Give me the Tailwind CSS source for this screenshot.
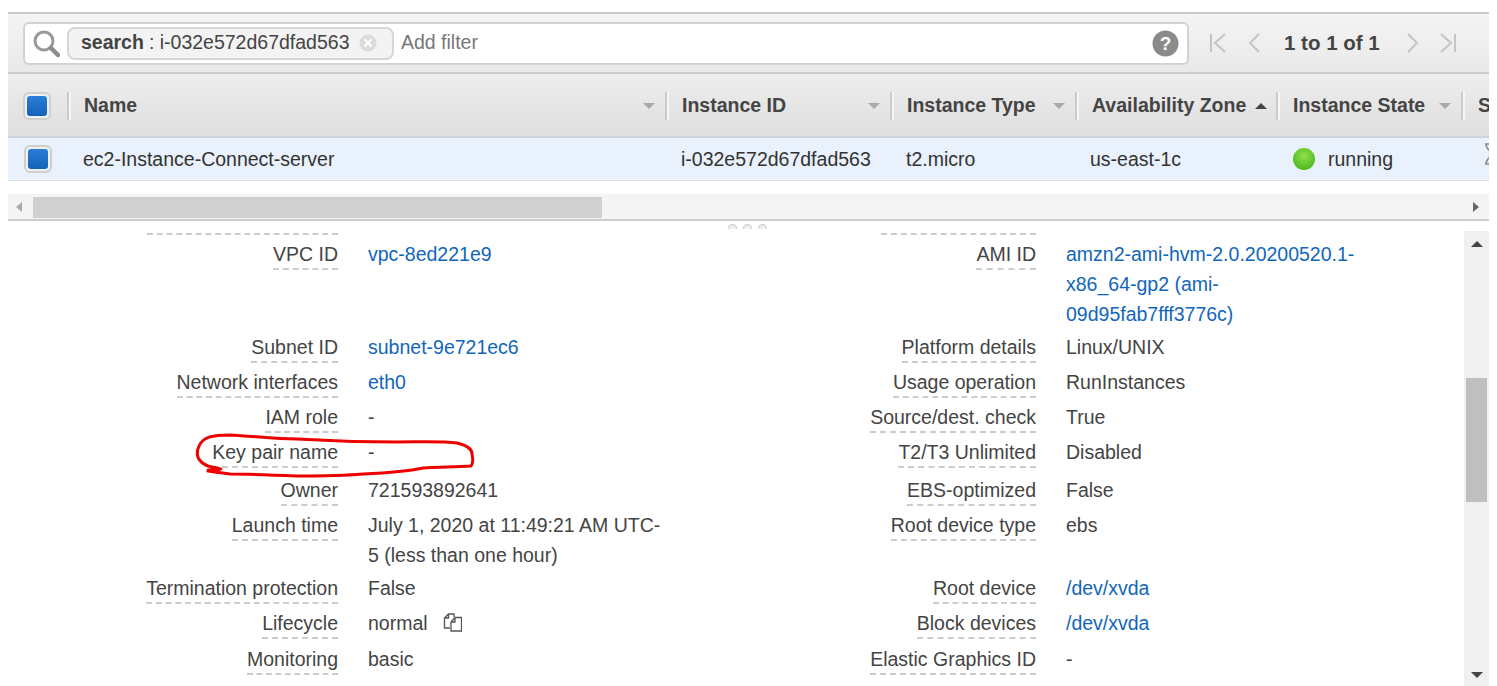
<!DOCTYPE html>
<html lang="en">
<head>
  <meta charset="UTF-8" />
  <title>EC2 Instances</title>
  <script src="https://cdn.jsdelivr.net/npm/@tailwindcss/browser@4"></script>
</head>
<body class="bg-white font-['Liberation_Sans',Arial,sans-serif] text-[19.5px] text-[#444]">
<div class="relative w-[1497px] h-[686px] overflow-hidden">
  <div class="ml-2 mt-3 w-[1481px] h-[674px] overflow-hidden">

    <!-- toolbar -->
    <div class="flex items-center h-[62px] border-y-2 border-[#ccc] bg-gradient-to-b from-[#f4f4f4] to-[#e9e9e9] pl-[15px]">
      <div class="flex items-center w-[1166px] h-[43px] bg-white border-2 border-[#d2d2d2] rounded-md">
        <svg class="ml-[7px] w-[28px] h-[30px]" viewBox="0 0 28 30" fill="none">
          <circle cx="12" cy="13" r="9" stroke="#999" stroke-width="3" />
          <path d="M19 20l7 7" stroke="#8c8c8c" stroke-width="4.5" stroke-linecap="round" />
        </svg>
        <div class="flex items-center ml-[7px] w-[327px] h-[33px] bg-[#f3f3f3] border-2 border-[#d6d6d6] rounded-lg pl-[12px]">
          <span class="font-bold">search</span><span class="ml-[5px] whitespace-nowrap">: i-032e572d67dfad563</span>
          <svg class="ml-[9px] w-[18px] h-[18px] shrink-0" viewBox="0 0 18 18">
            <circle cx="9" cy="9" r="8.5" fill="#dcdcdc" />
            <path d="M5.5 5.5l7 7M12.5 5.5l-7 7" stroke="#fff" stroke-width="2" />
          </svg>
        </div>
        <span class="ml-[7px] text-[#777]">Add filter</span>
        <svg class="ml-auto mr-[8px] w-[27px] h-[27px]" viewBox="0 0 27 27">
          <circle cx="13.5" cy="13.5" r="13" fill="#8a8a8a" />
          <text x="13.5" y="20" text-anchor="middle" font-family="Liberation Sans" font-weight="700" font-size="19" fill="#fff">?</text>
        </svg>
      </div>
      <svg class="ml-[20px] w-[18px] h-[20px]" viewBox="0 0 18 20" fill="none" stroke="#c4c4c4" stroke-width="2">
        <path d="M2 1v18M16 1L6 10l10 9" />
      </svg>
      <svg class="ml-[21px] w-[12px] h-[20px]" viewBox="0 0 12 20" fill="none" stroke="#c4c4c4" stroke-width="2">
        <path d="M11 1L2 10l9 9" />
      </svg>
      <span class="ml-[24px] text-[20.5px] font-bold whitespace-nowrap text-[#444]">1 to 1 of 1</span>
      <svg class="ml-[27px] w-[12px] h-[20px]" viewBox="0 0 12 20" fill="none" stroke="#c4c4c4" stroke-width="2">
        <path d="M1 1l9 9-9 9" />
      </svg>
      <svg class="ml-[20px] w-[18px] h-[20px]" viewBox="0 0 18 20" fill="none" stroke="#c4c4c4" stroke-width="2">
        <path d="M2 1l10 9-10 9M16 1v18" />
      </svg>
    </div>

    <!-- table header -->
    <div class="flex h-[64px] pt-[2px] border-b-2 border-[#ccd3dc] bg-gradient-to-b from-[#eeeeee] to-[#dedede] font-bold text-[#444] whitespace-nowrap">
      <div class="flex items-center w-[59px] shrink-0 pl-[15px]">
        <div class="flex items-center justify-center w-[28px] h-[28px] bg-[#f0f0f0] border-2 border-[#cfcfcf] rounded-md">
          <div class="w-[20px] h-[20px] rounded-[3px] bg-gradient-to-b from-[#2a7fd9] to-[#1262b8]"></div>
        </div>
      </div>
      <div class="flex items-center w-[598px] shrink-0 pl-[17px] pr-[10px] relative">
        <i class="w-[2px] h-[28px] bg-[#ccc] shadow-[2px_0_0_#f6f6f6] absolute left-0"></i>
        Name
        <i class="ml-auto w-0 h-0 border-x-[6px] border-x-transparent border-t-[6px] border-t-[#aaa]"></i>
      </div>
      <div class="flex items-center w-[225px] shrink-0 pl-[17px] pr-[10px] relative">
        <i class="w-[2px] h-[28px] bg-[#ccc] shadow-[2px_0_0_#f6f6f6] absolute left-0"></i>
        Instance ID
        <i class="ml-auto w-0 h-0 border-x-[6px] border-x-transparent border-t-[6px] border-t-[#aaa]"></i>
      </div>
      <div class="flex items-center w-[185px] shrink-0 pl-[17px] pr-[10px] relative">
        <i class="w-[2px] h-[28px] bg-[#ccc] shadow-[2px_0_0_#f6f6f6] absolute left-0"></i>
        Instance Type
        <i class="ml-auto w-0 h-0 border-x-[6px] border-x-transparent border-t-[6px] border-t-[#aaa]"></i>
      </div>
      <div class="flex items-center w-[201px] shrink-0 pl-[17px] pr-[9px] relative">
        <i class="w-[2px] h-[28px] bg-[#ccc] shadow-[2px_0_0_#f6f6f6] absolute left-0"></i>
        Availability Zone
        <i class="ml-auto w-0 h-0 border-x-[6px] border-x-transparent border-b-[6px] border-b-[#444]"></i>
      </div>
      <div class="flex items-center w-[185px] shrink-0 pl-[17px] pr-[10px] relative">
        <i class="w-[2px] h-[28px] bg-[#ccc] shadow-[2px_0_0_#f6f6f6] absolute left-0"></i>
        Instance State
        <i class="ml-auto w-0 h-0 border-x-[6px] border-x-transparent border-t-[6px] border-t-[#aaa]"></i>
      </div>
      <div class="flex items-center w-[28px] shrink-0 pl-[17px] relative">
        <i class="w-[2px] h-[28px] bg-[#ccc] shadow-[2px_0_0_#f6f6f6] absolute left-0"></i>
        S
      </div>
    </div>

    <!-- selected row -->
    <div class="flex items-center h-[43px] border-b border-[#dadfe6] bg-[#e8f1fc] text-[#333] whitespace-nowrap">
      <div class="w-[75px] shrink-0 pl-[16px]">
        <div class="flex items-center justify-center w-[28px] h-[28px] bg-[#f0f0f0] border-2 border-[#cfcfcf] rounded-md">
          <div class="w-[20px] h-[20px] rounded-[3px] bg-gradient-to-b from-[#2a7fd9] to-[#1262b8]"></div>
        </div>
      </div>
      <div class="w-[598px] shrink-0 pt-[2px]">ec2-Instance-Connect-server</div>
      <div class="w-[225px] shrink-0 pt-[2px]">i-032e572d67dfad563</div>
      <div class="w-[184px] shrink-0 pt-[2px]">t2.micro</div>
      <div class="w-[203px] shrink-0 pt-[2px]">us-east-1c</div>
      <div class="flex items-center w-[192px] shrink-0">
        <span class="w-[22px] h-[22px] rounded-full bg-[radial-gradient(circle_at_50%_35%,#8fe04a,#3fae12)]"></span>
        <span class="ml-[13px] pt-[2px]">running</span>
      </div>
      <svg class="w-[8px] h-[22px] shrink-0 -mt-[10px]" viewBox="0 0 8 22" fill="none" stroke="#888" stroke-width="1.5">
        <path d="M0 1h8M0 21h8M1 1c0 6 6 7 6 10s-6 4-6 10" />
      </svg>
    </div>

    <!-- horizontal scrollbar -->
    <div class="flex items-center mt-[13px] h-[25px] bg-[#f4f4f4]">
      <i class="ml-[8px] w-0 h-0 border-y-[5px] border-y-transparent border-r-[6px] border-r-[#aaa]"></i>
      <div class="ml-[11px] w-[569px] h-[21px] mt-[2px] bg-[#d0d0d0]"></div>
      <i class="ml-auto mr-[10px] w-0 h-0 border-y-[5px] border-y-transparent border-l-[6px] border-l-[#666]"></i>
    </div>

    <!-- details panel -->
    <div class="relative border-t-2 border-[#ccc] h-[467px] overflow-hidden">
      <div class="absolute left-[720px] top-[3px] flex gap-[6px]">
        <i class="w-[9px] h-[5px] rounded-t-full border border-b-0 border-[#ccc] bg-[#eee]"></i>
        <i class="w-[9px] h-[5px] rounded-t-full border border-b-0 border-[#ccc] bg-[#eee]"></i>
        <i class="w-[9px] h-[5px] rounded-t-full border border-b-0 border-[#ccc] bg-[#eee]"></i>
      </div>

      <div class="grid grid-cols-[330px_330px_368px_334px] grid-rows-[18px_93px_35px_35px_35px_38px_35px_63px_35px_36px_36px] leading-[30px]">
        <div class="h-[14px] w-[191px] justify-self-end border-b-2 border-dashed border-[#ccc]"></div>
        <div></div>
        <div class="h-[14px] w-[155px] justify-self-end border-b-2 border-dashed border-[#ccc]"></div>
        <div></div>

        <div class="text-right"><span class="inline-block h-[31px] border-b-2 border-dashed border-[#ccc]">VPC ID</span></div>
        <div class="pl-[30px] text-[#1166bb]">vpc-8ed221e9</div>
        <div class="text-right"><span class="inline-block h-[31px] border-b-2 border-dashed border-[#ccc]">AMI ID</span></div>
        <div class="pl-[30px] text-[#1166bb]">amzn2-ami-hvm-2.0.20200520.1-x86_64-gp2 (ami-09d95fab7fff3776c)</div>

        <div class="text-right"><span class="inline-block h-[31px] border-b-2 border-dashed border-[#ccc]">Subnet ID</span></div>
        <div class="pl-[30px] text-[#1166bb]">subnet-9e721ec6</div>
        <div class="text-right"><span class="inline-block h-[31px] border-b-2 border-dashed border-[#ccc]">Platform details</span></div>
        <div class="pl-[30px]">Linux/UNIX</div>

        <div class="text-right"><span class="inline-block h-[31px] border-b-2 border-dashed border-[#ccc]">Network interfaces</span></div>
        <div class="pl-[30px] text-[#1166bb]">eth0</div>
        <div class="text-right"><span class="inline-block h-[31px] border-b-2 border-dashed border-[#ccc]">Usage operation</span></div>
        <div class="pl-[30px]">RunInstances</div>

        <div class="text-right"><span class="inline-block h-[31px] border-b-2 border-dashed border-[#ccc]">IAM role</span></div>
        <div class="pl-[30px]">-</div>
        <div class="text-right"><span class="inline-block h-[31px] border-b-2 border-dashed border-[#ccc]">Source/dest. check</span></div>
        <div class="pl-[30px]">True</div>

        <div class="text-right"><span class="inline-block h-[31px] border-b-2 border-dashed border-[#ccc]">Key pair name</span></div>
        <div class="pl-[30px]">-</div>
        <div class="text-right"><span class="inline-block h-[31px] border-b-2 border-dashed border-[#ccc]">T2/T3 Unlimited</span></div>
        <div class="pl-[30px]">Disabled</div>

        <div class="text-right"><span class="inline-block h-[31px] border-b-2 border-dashed border-[#ccc]">Owner</span></div>
        <div class="pl-[30px]">721593892641</div>
        <div class="text-right"><span class="inline-block h-[31px] border-b-2 border-dashed border-[#ccc]">EBS-optimized</span></div>
        <div class="pl-[30px]">False</div>

        <div class="text-right"><span class="inline-block h-[31px] border-b-2 border-dashed border-[#ccc]">Launch time</span></div>
        <div class="pl-[30px]">July 1, 2020 at 11:49:21 AM UTC-5 (less than one hour)</div>
        <div class="text-right"><span class="inline-block h-[31px] border-b-2 border-dashed border-[#ccc]">Root device type</span></div>
        <div class="pl-[30px]">ebs</div>

        <div class="text-right"><span class="inline-block h-[31px] border-b-2 border-dashed border-[#ccc]">Termination protection</span></div>
        <div class="pl-[30px]">False</div>
        <div class="text-right"><span class="inline-block h-[31px] border-b-2 border-dashed border-[#ccc]">Root device</span></div>
        <div class="pl-[30px] text-[#1166bb]">/dev/xvda</div>

        <div class="text-right"><span class="inline-block h-[31px] border-b-2 border-dashed border-[#ccc]">Lifecycle</span></div>
        <div class="flex items-start pl-[30px]">normal
          <svg class="ml-[15px] mt-[5px] w-[19px] h-[19px]" viewBox="0 0 19 19" fill="none" stroke="#555" stroke-width="1.3">
            <path d="M7 15H1.500V5L5.500 1H11V4M5.500 1V5H1.500" />
            <path d="M8 18V9L12 4.500H18.500V18ZM12 4.500V9H8" />
          </svg>
        </div>
        <div class="text-right"><span class="inline-block h-[31px] border-b-2 border-dashed border-[#ccc]">Block devices</span></div>
        <div class="pl-[30px] text-[#1166bb]">/dev/xvda</div>

        <div class="text-right"><span class="inline-block h-[31px] border-b-2 border-dashed border-[#ccc]">Monitoring</span></div>
        <div class="pl-[30px]">basic</div>
        <div class="text-right"><span class="inline-block h-[31px] border-b-2 border-dashed border-[#ccc]">Elastic Graphics ID</span></div>
        <div class="pl-[30px]">-</div>
      </div>

      <!-- vertical scrollbar -->
      <div class="absolute right-0 top-[10px] bottom-0 w-[25px] bg-[#f0f0f0]">
        <i class="absolute left-[7px] top-[10px] w-0 h-0 border-x-[6px] border-x-transparent border-b-[6px] border-b-[#444]"></i>
        <div class="absolute left-[2px] top-[147px] w-[21px] h-[124px] bg-[#bfbfbf]"></div>
        <i class="absolute left-[7px] bottom-[8px] w-0 h-0 border-x-[6px] border-x-transparent border-t-[6px] border-t-[#444]"></i>
      </div>
    </div>
  </div>

  <!-- red hand-drawn annotation -->
  <svg class="absolute left-0 top-0 pointer-events-none" width="1497" height="686" fill="none">
    <path d="M208 470C226 469 224 470 208 466C198 462 195 455 199 446C203 437 212 435 230 435C252 436 275 439 297 439C330 441 365 442 397 442C420 442 442 441 457 443C466 445 472 449 472 454C473 459 473 464 471 466C455 467 440 467 423 468C405 472 385 473 363 474C340 476 318 476 297 476C275 475 250 474 230 474C222 473 214 472 208 471" stroke="#ee0000" stroke-width="3" stroke-linecap="round" />
  </svg>
</div>
</body>
</html>
